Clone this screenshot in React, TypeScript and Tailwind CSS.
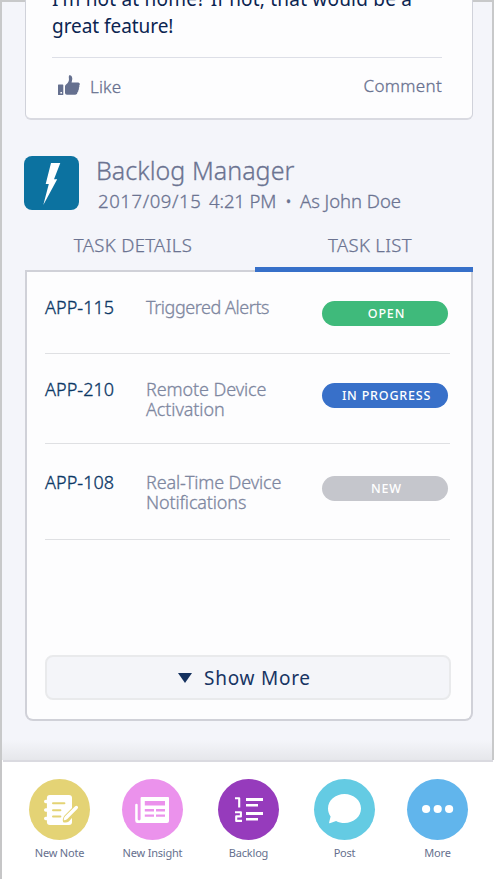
import type { ReactNode } from "react";

const sans = "font-['Noto_Sans','Open_Sans',sans-serif]";

function ThumbIcon() {
  return (
    <svg width="24" height="22" viewBox="0 0 24 22" className="shrink-0">
      <path fill="#65708f" fillRule="evenodd" d="M1.6 9.4H5.6Q6.3 9.4 6.3 10V19.4Q6.3 20 5.6 20H1.6Q1 20 1 19.4V10Q1 9.4 1.6 9.4ZM3.4 17V18.6H5V17Z" />
      <path fill="#65708f" d="M12.2 0.2C14.6 -0.3 15.6 2.2 15.2 4.6L14.6 7.4H21.2Q23 7.6 22.8 9.2Q22.7 10.2 22.2 10.6Q22.8 11.5 21.8 13Q22.3 14.2 21.3 15.2Q21.6 16.4 20.6 17.1Q20.5 19.7 18.2 19.8H10Q8 19.8 8 18V11.2Q8 10 9.3 9.2C11.3 7.8 12.2 6 11.9 3.4Q11.6 1.2 12.2 .2Z" />
    </svg>
  );
}

function NoteIcon() {
  return (
    <svg width="61" height="61" viewBox="0 0 61 61">
      <rect x="17.9" y="16" width="25.1" height="30" rx="3" fill="#fff" />
      <path d="M16.7 22.5H19M16.7 31H19M16.7 39.5H19" stroke="#fff" strokeWidth="3.4" strokeLinecap="round" />
      <path d="M24 24.2H35.4M24 31.2H31.4M24 37.6H31.4" stroke="#e4d375" strokeWidth="2" strokeLinecap="round" />
      <path d="M35.6 36.4L47 25L51 30L39.8 42.5Q37.5 44.2 34.2 43.3Q32.9 40 35.6 36.4Z" fill="#e4d375" />
      <path d="M46.2 27.2Q47.7 26.2 48.6 27.3Q49.7 28.5 48.5 29.8L38.3 39.9Q36.7 41.3 34.8 41.2Q34.5 39 36.1 37.3Z" fill="#fff" />
    </svg>
  );
}

function InsightIcon() {
  return (
    <svg width="61" height="61" viewBox="0 0 61 61">
      <path fill="#fff" d="M19.6 18H46Q47 18 47 19V42Q47 44 45 44H15.5Q13.2 44 13.2 41.5V26Q13.2 24.8 14.5 24.8Q15.7 24.8 15.7 26V40.3Q15.7 41.4 17.1 41.4Q18.6 41.4 18.6 40V19Q18.6 18 19.6 18Z" />
      <path fill="#eb92ec" d="M22.8 22H43V26.5H22.8ZM22.8 30.1H32V32.4H22.8ZM34 30.1H43V32.4H34ZM22.8 35.4H32V37.8H22.8ZM34 35.4H43V37.8H34Z" />
    </svg>
  );
}

function BacklogIcon() {
  return (
    <svg width="61" height="61" viewBox="0 0 61 61" fill="none" stroke="#fff">
      <path strokeWidth="2.1" strokeLinejoin="round" d="M17 19.2H21.2V28.4" />
      <path strokeWidth="2.1" strokeLinejoin="round" d="M17 33.2H22.9V37.4H18.2V41.9H24" />
      <path strokeWidth="3" d="M28 20.5H45M28 34.6H45" />
      <path strokeWidth="2.6" d="M28 26.2H40M28 40.3H40" />
    </svg>
  );
}

function PostIcon() {
  return (
    <svg width="61" height="61" viewBox="0 0 61 61" fill="#fff">
      <path d="M30.5 15C39.7 15 47 21.4 47 29.5S39.7 44 30.5 44C27.4 44 24.6 43.4 22.1 42L15.8 44.2Q14.9 44.4 15.1 43.5L16.6 37.5C15 35.1 14 32.5 14 29.5C14 21.4 21.3 15 30.5 15Z" />
    </svg>
  );
}

function MoreIcon() {
  return (
    <svg width="61" height="61" viewBox="0 0 61 61" fill="#fff">
      <circle cx="19.1" cy="30" r="4.1" />
      <circle cx="30.7" cy="30" r="4.1" />
      <circle cx="42.1" cy="30" r="4.1" />
    </svg>
  );
}

function Post() {
  return (
    <article className="-mt-[2px] ml-[23px] h-[120px] w-[448px] shrink-0 overflow-hidden rounded-b-md border-x border-b-2 border-x-[#d0d2da] border-b-[#d9dae1] bg-[#fdfdfe] pr-[30px] pl-[26px]">
      <p className="-mt-[14px] h-[72px] border-b border-[#dddfe7] text-[19px] leading-[27px] tracking-[0.2px] whitespace-nowrap text-[#0b2451]">
        I'm not at home? If not, that would be a
        <br />
        <span className="tracking-[-0.05px]">great feature!</span>
      </p>
      <div className="flex items-start pt-[17px] pl-[5px] text-[17px] leading-6 font-light text-[#68718f] [-webkit-text-stroke:0.3px]">
        <ThumbIcon />
        <span className="ml-[9px] tracking-[0.2px]">Like</span>
        <span className="-mt-px ml-auto tracking-[0.3px]">Comment</span>
      </div>
    </article>
  );
}

function Header() {
  return (
    <header className="mt-9 ml-[22px] flex h-[55px] shrink-0 text-[#6b7391]">
      <div className="h-[54px] w-[55px] rounded-lg bg-[#0c72a0]">
        <svg width="55" height="54" viewBox="0 0 55 54" fill="#fff">
          <path d="M27 7H36.3L30 23.3H33.2L19.3 49L24.8 28H21.7Z" />
        </svg>
      </div>
      <div className="-mt-px ml-[17px] font-light whitespace-nowrap [-webkit-text-stroke:0.3px]">
        <h1 className="h-[31px] text-[25px] leading-[30px] tracking-[0.05px]">Backlog Manager</h1>
        <p className="flex text-[18.5px] leading-[30px]">
          <span className="w-[113px] pl-[2px] tracking-[0.6px]">2017/09/15</span>
          <span className="w-[75px] tracking-[-0.1px]">4:21 PM</span>
          <span className="w-[15px] pl-px">•</span>
          <span className="pl-px tracking-[-0.05px]">As John Doe</span>
        </p>
      </div>
    </header>
  );
}

const tasks = [
  { id: "APP-115", name: ["Triggered Alerts"], status: "OPEN", color: "bg-[#3fba7b]", row: "h-[82px] pt-[25px]", tracking: "tracking-[-0.45px]" },
  { id: "APP-210", name: ["Remote Device", "Activation"], status: "IN PROGRESS", color: "bg-[#3870c9]", row: "h-[90px] pt-[25px]", tracking: "tracking-[-0.1px]" },
  { id: "APP-108", name: ["Real-Time Device", "Notifications"], status: "NEW", color: "bg-[#c5c6cc]", row: "h-[96px] pt-[28px]", tracking: "tracking-[-0.15px]" },
];

function TaskCard() {
  return (
    <section className="mt-[19px] ml-[23px] w-[448px] shrink-0">
      <div className="flex h-[42px] text-center text-[18.5px] leading-[30px] font-light text-[#6b7391] [-webkit-text-stroke:0.25px]">
        <div className="w-[230px] border-b-2 border-[#d0d1d8] pr-[14px] tracking-[0.35px]">TASK DETAILS</div>
        <div className="w-[218px] border-b-[5px] border-[#3770c9] pl-3 tracking-[0.35px]">TASK LIST</div>
      </div>
      <div className="h-[449px] rounded-b-lg border-x-2 border-b-2 border-[#d0d1d8] bg-[#fdfdfe] pr-[21px] pl-[18px]">
        {tasks.map((t) => (
          <div key={t.id} className={"flex items-start border-b border-[#dfe0e3] text-[18px] leading-5 font-light whitespace-nowrap " + t.row}>
            <span className="w-[101px] shrink-0 tracking-[0.05px] text-[#0c3866] [-webkit-text-stroke:0.35px]">{t.id}</span>
            <p className={"w-[176px] shrink-0 whitespace-pre-line text-[#7e87a0] [-webkit-text-stroke:0.3px] " + t.tracking}>{t.name.join("\n")}</p>
            <span className={"mt-[4px] h-[25px] w-[126px] shrink-0 rounded-full pl-[3px] text-center text-[12.5px] leading-[25px] font-medium tracking-[0.8px] text-white " + t.color}>
              {t.status}
            </span>
          </div>
        ))}
        <button className="mt-[115px] flex h-[45px] w-[406px] items-center rounded-lg border-2 border-[#e9eaec] bg-[#f4f5f9] pl-[131px] text-[19px] font-normal tracking-[0.75px] text-[#173463]">
          <svg width="14" height="10" viewBox="0 0 14 10" fill="#14315f">
            <path d="M0 0H14L7 10Z" />
          </svg>
          <span className="mt-px ml-[12px]">Show More</span>
        </button>
      </div>
    </section>
  );
}

function NavItem({ label, color, spacing, children }: { label: string; color: string; spacing: string; children: ReactNode }) {
  return (
    <div className={"flex w-[61px] shrink-0 flex-col items-center " + spacing}>
      <div className={"size-[61px] rounded-full " + color}>{children}</div>
      <span className="mt-[3px] text-[11px] leading-5 tracking-[-0.2px] whitespace-nowrap text-[#66708e]">{label}</span>
    </div>
  );
}

export default function App() {
  return (
    <div className={"flex h-[879px] w-[494px] flex-col overflow-hidden bg-white " + sans}>
      <main className="flex h-[760px] shrink-0 flex-col border-x-2 border-t-2 border-[#c8c9ca] bg-[#f4f5fa]">
        <Post />
        <Header />
        <TaskCard />
        <div className="mt-auto h-5 shrink-0 bg-linear-to-b from-[#f4f5fa] to-[#e6e7eb]" />
      </main>
      <div className="flex grow border-l-2 border-[#c6c6c7]">
        <nav className="ml-px flex w-[490px] border-t-2 border-[#dadae0] bg-white pt-[17px] pl-[26px]">
          <NavItem label="New Note" color="bg-[#e4d375]" spacing=""><NoteIcon /></NavItem>
          <NavItem label="New Insight" color="bg-[#eb92ec]" spacing="ml-[32px]"><InsightIcon /></NavItem>
          <NavItem label="Backlog" color="bg-[#963bbc]" spacing="ml-[35px]"><BacklogIcon /></NavItem>
          <NavItem label="Post" color="bg-[#64cbe3]" spacing="ml-[35px]"><PostIcon /></NavItem>
          <NavItem label="More" color="bg-[#61b5ec]" spacing="ml-[32px]"><MoreIcon /></NavItem>
        </nav>
      </div>
    </div>
  );
}
